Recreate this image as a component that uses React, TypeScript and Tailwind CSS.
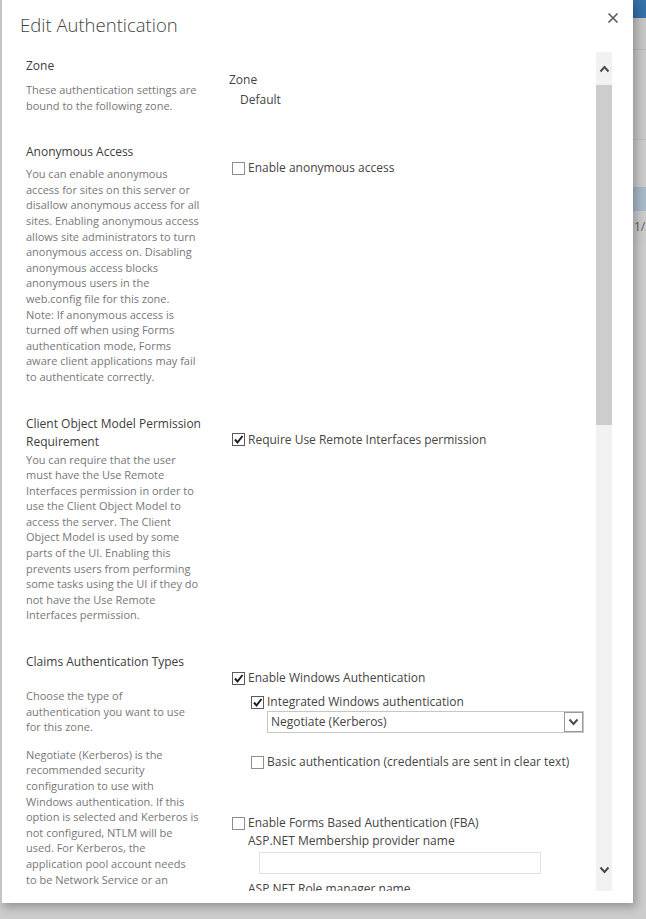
import React from 'react';

type Section = {
  title: string[];
  titleGap: string;
  paras: string[][];
  body: React.ReactNode;
};

function Chevron({ up, className }: { up?: boolean; className?: string }) {
  return (
    <svg width="11" height="8" viewBox="0 0 11 8" className={className}>
      <polyline
        points={up ? '1.5,6.5 5.5,2 9.5,6.5' : '1.5,1.5 5.5,6 9.5,1.5'}
        fill="none"
        stroke="#4a4a4a"
        strokeWidth="2"
      />
    </svg>
  );
}

function Check({ checked, label, indent = 'ml-[3px]' }: { checked?: boolean; label: string; indent?: string }) {
  return (
    <div className={`flex items-center h-[18px] leading-[18px] ${indent}`}>
      <span
        className={`w-[13px] h-[13px] bg-white border flex items-center justify-center shrink-0 ${
          checked ? 'border-[#5b5b5b]' : 'border-[#8e8e8e]'
        }`}
      >
        {checked && (
          <svg width="11" height="11" viewBox="0 0 11 11">
            <polyline points="2,5.5 4.5,8.5 9.5,2" fill="none" stroke="#1e1e1e" strokeWidth="2" />
          </svg>
        )}
      </span>
      <span className="ml-[3px] text-[12px] text-[#444] whitespace-nowrap">{label}</span>
    </div>
  );
}

// page behind the modal, only its right edge shows
function BackdropPage() {
  return (
    <div className="flex flex-col h-full">
      <div className="h-[18px] bg-[#3570a8]" />
      <div className="h-[32px] bg-[#c6c6c6] border-b border-[#b7b7b7]" />
      <div className="h-[90px] bg-[#c9c9c9] border-b border-[#bcbcbc]" />
      <div className="h-[47px] bg-[#cbcbcb]" />
      <div className="h-[24px] bg-[#a9b9c8]" />
      <div className="h-[32px] leading-[32px] pl-[634px] text-[12px] text-[#5e5e5e] bg-[#cbcbcb] whitespace-nowrap">
        1/2
      </div>
      <div className="flex-1 bg-[#cccccc]" />
    </div>
  );
}

const sections: Section[] = [
  {
    title: ['Zone'],
    titleGap: 'mt-[7px]',
    paras: [['These authentication settings are', 'bound to the following zone.']],
    body: (
      <div className="pt-[13px] text-[12px] text-[#444] leading-[20px]">
        <div>Zone</div>
        <div className="pl-[11px]">Default</div>
      </div>
    ),
  },
  {
    title: ['Anonymous Access'],
    titleGap: 'mt-[5px]',
    paras: [
      [
        'You can enable anonymous',
        'access for sites on this server or',
        'disallow anonymous access for all',
        'sites. Enabling anonymous access',
        'allows site administrators to turn',
        'anonymous access on. Disabling',
        'anonymous access blocks',
        'anonymous users in the',
        'web.config file for this zone.',
        'Note: If anonymous access is',
        'turned off when using Forms',
        'authentication mode, Forms',
        'aware client applications may fail',
        'to authenticate correctly.',
      ],
    ],
    body: (
      <div className="pt-[16px]">
        <Check label="Enable anonymous access" />
      </div>
    ),
  },
  {
    title: ['Client Object Model Permission', 'Requirement'],
    titleGap: 'mt-[1px]',
    paras: [
      [
        'You can require that the user',
        'must have the Use Remote',
        'Interfaces permission in order to',
        'use the Client Object Model to',
        'access the server. The Client',
        'Object Model is used by some',
        'parts of the UI. Enabling this',
        'prevents users from performing',
        'some tasks using the UI if they do',
        'not have the Use Remote',
        'Interfaces permission.',
      ],
    ],
    body: (
      <div className="pt-[16px]">
        <Check checked label="Require Use Remote Interfaces permission" />
      </div>
    ),
  },
  {
    title: ['Claims Authentication Types'],
    titleGap: 'mt-[17px]',
    paras: [
      ['Choose the type of', 'authentication you want to use', 'for this zone.'],
      [
        'Negotiate (Kerberos) is the',
        'recommended security',
        'configuration to use with',
        'Windows authentication. If this',
        'option is selected and Kerberos is',
        'not configured, NTLM will be',
        'used. For Kerberos, the',
        'application pool account needs',
        'to be Network Service or an',
        'account that has been configured',
        'by the domain administrator.',
      ],
    ],
    body: (
      <div className="pt-[16px]">
        <Check checked label="Enable Windows Authentication" />
        <div className="mt-[6px]">
          <Check checked indent="ml-[22px]" label="Integrated Windows authentication" />
        </div>
        <div className="ml-[38px] w-[317px] h-[22px] border border-[#c6c6c6] flex items-center justify-between">
          <span className="pl-[3px] text-[12px] text-[#444]">Negotiate (Kerberos)</span>
          <span className="w-[19px] h-[20px] border border-[#9a9a9a] flex items-center justify-center">
            <Chevron />
          </span>
        </div>
        <div className="mt-[20px]">
          <Check indent="ml-[22px]" label="Basic authentication (credentials are sent in clear text)" />
        </div>
        <div className="mt-[43px]">
          <Check label="Enable Forms Based Authentication (FBA)" />
        </div>
        <div className="ml-[19px] text-[12px] text-[#444] leading-[18px]">ASP.NET Membership provider name</div>
        <div className="ml-[30px] mt-[2px] w-[282px] h-[22px] border border-[#e1e1e1]" />
        <div className="ml-[19px] mt-[6px] text-[12px] text-[#444] leading-[18px]">ASP.NET Role manager name</div>
        <div className="ml-[30px] mt-[2px] w-[282px] h-[22px] border border-[#e1e1e1]" />
      </div>
    ),
  },
];

export default function App() {
  return (
    <div className="relative w-[646px] h-[919px] overflow-hidden bg-[#cccccc] font-['Open_Sans',sans-serif]">
      <BackdropPage />

      <div className="absolute left-0 top-0 w-[633px] h-[903px] bg-white border-l-2 border-[#c4c4c4] shadow-[3px_4px_9px_rgba(0,0,0,0.28)] flex flex-col">
        <div className="relative h-[52px] shrink-0">
          <h1 className="pl-[18px] pt-[12px] text-[18.5px] leading-[26px] font-light text-[#444]">Edit Authentication</h1>
          <button className="absolute right-[14px] top-[12px] w-[12px] h-[12px]">
            <svg width="12" height="12" viewBox="0 0 12 12">
              <path d="M1.5 1.5 L10.5 10.5 M10.5 1.5 L1.5 10.5" stroke="#5a5a5a" strokeWidth="1.6" />
            </svg>
          </button>
        </div>

        <div className="flex flex-1 min-h-0 pb-[12px]">
          <div className="flex-1 overflow-hidden pl-[24px] pt-[5px]">
            {sections.map((s, i) => (
              <div key={i} className="flex pb-[30px]">
                <div className="w-[203px] shrink-0">
                  <div className="text-[12px] leading-[18px] text-[#3c3c3c] whitespace-nowrap">
                    {s.title.map((t) => (
                      <div key={t}>{t}</div>
                    ))}
                  </div>
                  {s.paras.map((p, j) => (
                    <div
                      key={j}
                      className={`text-[11px] leading-[15.6px] text-[#777] whitespace-nowrap ${j === 0 ? s.titleGap : 'mt-[12px]'}`}
                    >
                      {p.map((line) => (
                        <div key={line}>{line}</div>
                      ))}
                    </div>
                  ))}
                </div>
                <div className="flex-1">{s.body}</div>
              </div>
            ))}
          </div>

          <div className="w-[16px] mr-[21px] bg-[#f2f2f2] flex flex-col shrink-0">
            <div className="h-[33px] flex items-center justify-center">
              <Chevron up />
            </div>
            <div className="h-[340px] bg-[#cdcdcd]" />
            <div className="flex-1" />
            <div className="h-[42px] flex items-center justify-center">
              <Chevron />
            </div>
          </div>
        </div>
      </div>
    </div>
  );
}
